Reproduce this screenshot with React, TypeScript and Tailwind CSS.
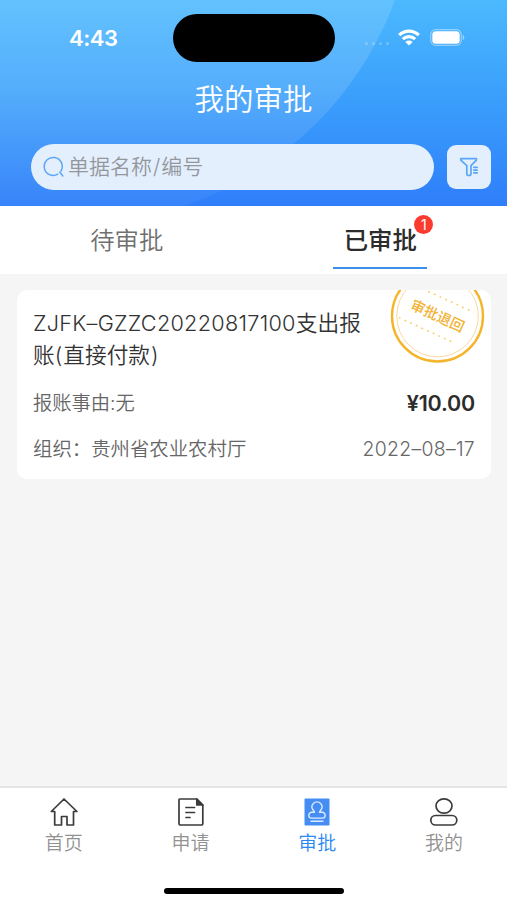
import clsx from 'clsx';
import type { ReactNode } from 'react';

const StatusBar = () => (
    <div className="relative flex h-[76px] items-start justify-between pl-[69px] pr-[42px]">
        <span className="mt-[25px] text-[22px] leading-[26px] font-semibold tracking-[-0.4px]">4:43</span>
        <div className="absolute left-[173px] top-[14px] h-12 w-[162px] rounded-full bg-black" />
        <div className="mt-[28px] flex items-center">
            <div className="mr-[9px] mt-[13px] flex gap-[3.5px]">
                {[0, 1, 2, 3].map((i) => (
                    <span key={i} className="size-[3.5px] rounded-full bg-white/25" />
                ))}
            </div>
            <svg className="mr-[10px] h-[17px] w-[22px]" viewBox="0 0 22 17" fill="none" stroke="#fff" strokeWidth="3.2">
                <path d="M1.2 6.2a13.8 13.8 0 0 1 19.6 0" />
                <path d="M4.9 10.1a8.6 8.6 0 0 1 12.200 0" />
                <path d="M11 16.6 7.400 13.100a5.100 5.100 0 0 1 7.200 0z" fill="#fff" stroke="none" />
            </svg>
            <svg className="mt-[1px] h-[17px] w-[35px]" viewBox="0 0 35 17">
                <rect x="0.7" y="0.7" width="30.6" height="15.6" rx="5" fill="none" stroke="#fff" strokeOpacity="0.42" strokeWidth="1.2" />
                <rect x="2.3" y="2.3" width="27.4" height="12.4" rx="3.5" fill="#fff" />
                <path d="M32.8 5.8c2 1 2 4.4 0 5.4z" fill="#fff" fillOpacity="0.5" />
            </svg>
        </div>
    </div>
);

const SearchBar = () => (
    <div className="flex items-center gap-[13px] pl-[31px] pr-4">
        <div className="flex h-[46px] w-[403px] items-center rounded-full bg-[#e4effe] pl-[12px]">
            <svg className="size-[22px]" viewBox="0 0 22 22" fill="none" stroke="#5ba6f5" strokeWidth="1.5" strokeLinecap="round">
                <path d="M14.8 18.2A9 9 0 1 1 18 15" />
                <path d="m16.8 16 3 4" />
            </svg>
            <span className="ml-[3px] text-[21px] leading-[30px] font-[350] text-[#93979c]">
                单据名称<span className="mx-[1px]">/</span>编号
            </span>
        </div>
        <button className="flex h-11 w-11 items-center justify-center rounded-[9px] bg-[#e4effe]">
            <svg className="size-[20px]" viewBox="0 0 20 20" fill="none" stroke="#5ba6f5" strokeWidth="1.7" strokeLinejoin="round" strokeLinecap="round">
                <path d="M1.8 1.700h15.600v1.500L12 8.600v7.800a2.100 2.100 0 0 1-4.200 0V8.600L1.800 3.200z" />
                <path d="M14.800 10.300h3.400M14.800 13.100h3.400M14.800 15.900h3.400" />
            </svg>
        </button>
    </div>
);

const ReturnStamp = () => (
    <svg className="absolute left-[372px] top-[-22px] size-[97px]" viewBox="0 0 97 97">
        <circle cx="48.5" cy="48" r="45.5" fill="none" stroke="#f5b52b" strokeWidth="2.4" />
        <circle cx="48.5" cy="48" r="40.8" fill="none" stroke="#f8d9a0" strokeWidth="1" />
        <g transform="rotate(24.5 48.5 48)">
            <path d="M30 29.5h50M14 65.500h61" stroke="#f6d06a" strokeWidth="1.6" strokeDasharray="1.8 4.4" />
            <text x="48.5" y="53" textAnchor="middle" fontSize="14.3" fontWeight="500" fill="#f3b233">审批退回</text>
        </g>
    </svg>
);

interface TabItemProps {
    label: string;
    active?: boolean;
    children: ReactNode;
}

const TabItem = ({ label, active, children }: TabItemProps) => (
    <div className="flex flex-1 flex-col items-center pl-[1px] pt-[9px]">
        <svg className="size-[30px]" viewBox="0 0 30 30" fill="none" stroke="#3b3b3b" strokeWidth="1.7" strokeLinejoin="round" strokeLinecap="round">
            {children}
        </svg>
        <span className={clsx('mt-[2px] text-[19px] leading-[30px] font-[350]', active ? 'text-[#2b87f5]' : 'text-[#929292]')}>{label}</span>
    </div>
);

export default function App() {
    return (
        <div className="flex h-[900px] w-[507px] flex-col overflow-hidden bg-[#f5f5f5] font-['Inter','Noto_Sans_CJK_SC',sans-serif]">
            <header className="relative h-[205.5px] shrink-0 overflow-hidden bg-linear-to-b from-[#4bb9fe] via-[#3a9dfb] to-[#307efa] text-white">
                <div className="absolute left-[-268px] top-[-460px] h-[684px] w-[684px] rounded-full bg-linear-to-b from-white/13 from-80% to-white/4 to-97%" />
                <div className="relative">
                    <StatusBar />
                    <h1 className="h-[68px] pt-[1px] text-center text-[29.5px] leading-[44px] font-[350]">我的审批</h1>
                    <SearchBar />
                </div>
            </header>

            <nav className="flex h-[68px] shrink-0 bg-white text-[24.4px] leading-[36px]">
                <div className="flex w-1/2 justify-center pt-[16px] font-[350] text-[#707070]">待审批</div>
                <div className="flex w-1/2 justify-center">
                    <div className="relative h-[63.5px] w-[94px] border-b-[2.5px] border-[#3a8fec] pt-[16px] text-center font-medium text-[#2c2c2c]">
                        已审批
                        <span className="absolute left-[81px] top-[9.5px] flex size-[19px] items-center justify-center rounded-full bg-[#fb3a30] text-[14px] leading-none font-normal text-white">1</span>
                    </div>
                </div>
            </nav>

            <main className="flex-1 px-[17px] pt-[16.5px]">
                <article className="relative h-[189px] w-[474px] overflow-hidden rounded-[10px] bg-white px-4 pt-[17px]">
                    <ReturnStamp />
                    <h2 className="w-[340px] whitespace-nowrap text-[21.7px] leading-[32px] font-[350] text-[#333]">
                        <span className="tracking-[0.26px]">ZJFK–GZZC20220817100</span>支出报
                        <br />
                        账<span className="mr-[1px]">(</span>直接付款<span className="ml-[1px]">)</span>
                    </h2>
                    <div className="mt-[17px] flex items-center justify-between leading-[30px]">
                        <span className="text-[19.3px] font-[350] text-[#666]">报账事由:无</span>
                        <span className="text-[21.5px] font-semibold tracking-[-0.2px] text-[#2c2c2c]">¥10.00</span>
                    </div>
                    <div className="mt-[16px] flex items-center justify-between text-[19.4px] leading-[30px] font-[350] text-[#666]">
                        <span>组织：贵州省农业农村厅</span>
                        <span className="tracking-[0.3px]">2022–08–17</span>
                    </div>
                </article>
            </main>

            <footer className="h-[114px] shrink-0 border-t-2 border-[#e6e6e6] bg-white">
                <div className="flex">
                    <TabItem label="首页">
                        <path d="M15 2 2.3 14.5h3.4V28h6.8v-8.5h5.500V28h6.500V14.500h3.400z" />
                    </TabItem>
                    <TabItem label="申请">
                        <path d="M3.5 2h17.300l6 6v18.500a1.500 1.500 0 0 1-1.500 1.500H4.500a1.500 1.500 0 0 1-1.500-1.500V2.500z" />
                        <path d="M20.8 2v6h6z" fill="#3b3b3b" />
                        <path d="M10 10.500h8.500M10 15.500h8.500M10 20.500h4" />
                    </TabItem>
                    <TabItem label="审批" active>
                        <rect x="2.5" y="1.5" width="25" height="27" rx="1" fill="#458df2" stroke="none" />
                        <path d="M12.500 15.300c0-1.300-2.700-2.700-2.700-5.200a5.200 5.200 0 0 1 10.400 0c0 2.500-2.700 3.900-2.700 5.200h2.800a2.900 2.900 0 0 1 0 5.800H9.700a2.900 2.900 0 0 1 0-5.800z" stroke="#dcebff" strokeWidth="1.4" />
                        <path d="M9 24.300h12" stroke="#dcebff" strokeWidth="1.4" />
                    </TabItem>
                    <TabItem label="我的">
                        <ellipse cx="15" cy="9" rx="8" ry="7.200" />
                        <rect x="1.8" y="18.500" width="26" height="9.500" rx="4.750" />
                    </TabItem>
                </div>
                <div className="mx-auto mt-[29px] h-[6px] w-[180px] rounded-full bg-black" />
            </footer>
        </div>
    );
}
